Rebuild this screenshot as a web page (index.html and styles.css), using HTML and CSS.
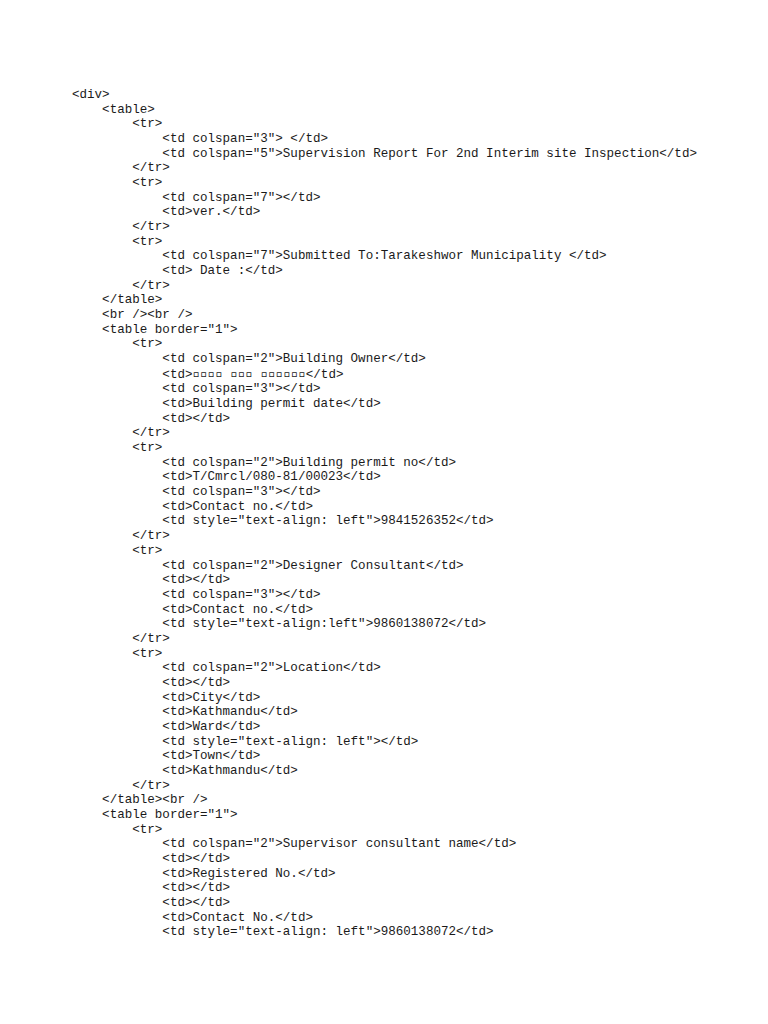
FILE: index.html
```html
<!DOCTYPE html>
<html>
<head>
<meta charset="utf-8">
<link rel="stylesheet" href="styles.css">
</head>
<body>
<pre class="code">&lt;div&gt;
    &lt;table&gt;
        &lt;tr&gt;
            &lt;td colspan="3"&gt; &lt;/td&gt;
            &lt;td colspan="5"&gt;Supervision Report For 2nd Interim site Inspection&lt;/td&gt;
        &lt;/tr&gt;
        &lt;tr&gt;
            &lt;td colspan="7"&gt;&lt;/td&gt;
            &lt;td&gt;ver.&lt;/td&gt;
        &lt;/tr&gt;
        &lt;tr&gt;
            &lt;td colspan="7"&gt;Submitted To:Tarakeshwor Municipality &lt;/td&gt;
            &lt;td&gt; Date :&lt;/td&gt;
        &lt;/tr&gt;
    &lt;/table&gt;
    &lt;br /&gt;&lt;br /&gt;
    &lt;table border="1"&gt;
        &lt;tr&gt;
            &lt;td colspan="2"&gt;Building Owner&lt;/td&gt;
            &lt;td&gt;<span class="g">▫▫▫▫ ▫▫▫ ▫▫▫▫▫▫</span>&lt;/td&gt;
            &lt;td colspan="3"&gt;&lt;/td&gt;
            &lt;td&gt;Building permit date&lt;/td&gt;
            &lt;td&gt;&lt;/td&gt;
        &lt;/tr&gt;
        &lt;tr&gt;
            &lt;td colspan="2"&gt;Building permit no&lt;/td&gt;
            &lt;td&gt;T/Cmrcl/080-81/00023&lt;/td&gt;
            &lt;td colspan="3"&gt;&lt;/td&gt;
            &lt;td&gt;Contact no.&lt;/td&gt;
            &lt;td style="text-align: left"&gt;9841526352&lt;/td&gt;
        &lt;/tr&gt;
        &lt;tr&gt;
            &lt;td colspan="2"&gt;Designer Consultant&lt;/td&gt;
            &lt;td&gt;&lt;/td&gt;
            &lt;td colspan="3"&gt;&lt;/td&gt;
            &lt;td&gt;Contact no.&lt;/td&gt;
            &lt;td style="text-align:left"&gt;9860138072&lt;/td&gt;
        &lt;/tr&gt;
        &lt;tr&gt;
            &lt;td colspan="2"&gt;Location&lt;/td&gt;
            &lt;td&gt;&lt;/td&gt;
            &lt;td&gt;City&lt;/td&gt;
            &lt;td&gt;Kathmandu&lt;/td&gt;
            &lt;td&gt;Ward&lt;/td&gt;
            &lt;td style="text-align: left"&gt;&lt;/td&gt;
            &lt;td&gt;Town&lt;/td&gt;
            &lt;td&gt;Kathmandu&lt;/td&gt;
        &lt;/tr&gt;
    &lt;/table&gt;&lt;br /&gt;
    &lt;table border="1"&gt;
        &lt;tr&gt;
            &lt;td colspan="2"&gt;Supervisor consultant name&lt;/td&gt;
            &lt;td&gt;&lt;/td&gt;
            &lt;td&gt;Registered No.&lt;/td&gt;
            &lt;td&gt;&lt;/td&gt;
            &lt;td&gt;&lt;/td&gt;
            &lt;td&gt;Contact No.&lt;/td&gt;
            &lt;td style="text-align: left"&gt;9860138072&lt;/td&gt;</pre>
</body>
</html>
```
FILE: styles.css
```css
html, body {
  margin: 0;
  padding: 0;
  background: #ffffff;
}
.code {
  margin: 0;
  padding: 88px 0 0 72px;
  font-family: "Liberation Mono", "DejaVu Sans Mono", monospace;
  font-size: 12.55px;
  line-height: 14.67px;
  color: #1a1a1a;
  white-space: pre;
}
.g {
  font-family: "DejaVu Sans Mono", monospace;
}
```
